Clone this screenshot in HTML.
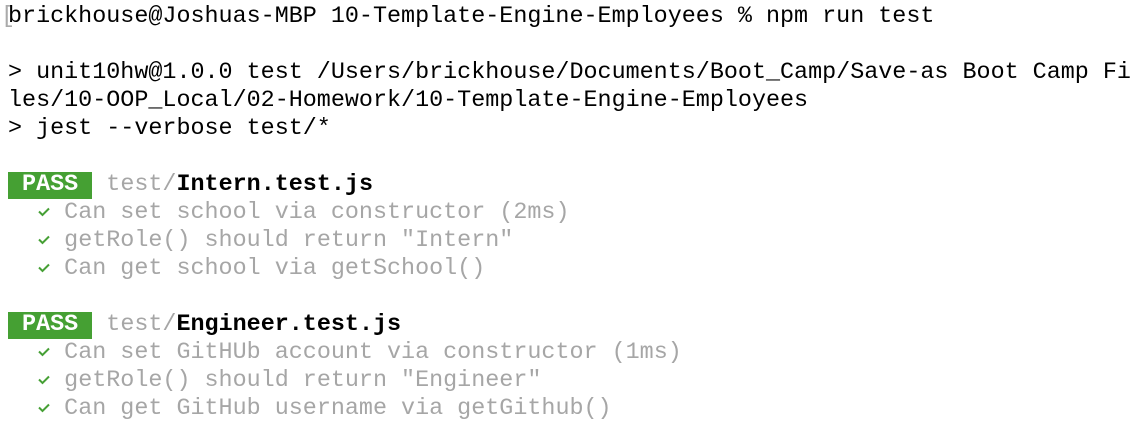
<!DOCTYPE html>
<html><head><style>
body{margin:0;width:1140px;height:448px;background:#fff;overflow:hidden;font-family:"Liberation Mono",monospace;font-size:23.4px;}
.t{position:absolute;left:8px;top:3px;}
.l{height:28px;line-height:28px;white-space:pre;color:#000;}
.g{color:#a6a6a6}
.b{font-weight:bold}
.p{background:#45a033;color:#fff;font-weight:bold;display:inline-block;height:27px;line-height:27px;}
.c{display:inline-block;width:14.04px;height:28px;vertical-align:top;position:relative}
.c svg{position:absolute;left:1px;top:6px}
.br{position:absolute;left:1px;top:3px;height:28px;line-height:28px;color:#aaa;}
</style></head><body>
<div class="br">[</div>
<div class="t">
<div class="l">brickhouse@Joshuas-MBP 10-Template-Engine-Employees % npm run test</div>
<div class="l"> </div>
<div class="l">&gt; unit10hw@1.0.0 test /Users/brickhouse/Documents/Boot_Camp/Save-as Boot Camp Fi</div>
<div class="l">les/10-OOP_Local/02-Homework/10-Template-Engine-Employees</div>
<div class="l">&gt; jest --verbose test/*</div>
<div class="l"> </div>
<div class="l"><span class="p"> PASS </span> <span class="g">test/</span><span class="b">Intern.test.js</span></div>
<div class="l">  <span class="c"><svg width="14" height="14" viewBox="0 0 14 14"><path d="M2 6.5L5.5 10L12 3.5" fill="none" stroke="#46a035" stroke-width="2"/></svg></span> <span class="g">Can set school via constructor (2ms)</span></div>
<div class="l">  <span class="c"><svg width="14" height="14" viewBox="0 0 14 14"><path d="M2 6.5L5.5 10L12 3.5" fill="none" stroke="#46a035" stroke-width="2"/></svg></span> <span class="g">getRole() should return "Intern"</span></div>
<div class="l">  <span class="c"><svg width="14" height="14" viewBox="0 0 14 14"><path d="M2 6.5L5.5 10L12 3.5" fill="none" stroke="#46a035" stroke-width="2"/></svg></span> <span class="g">Can get school via getSchool()</span></div>
<div class="l"> </div>
<div class="l"><span class="p"> PASS </span> <span class="g">test/</span><span class="b">Engineer.test.js</span></div>
<div class="l">  <span class="c"><svg width="14" height="14" viewBox="0 0 14 14"><path d="M2 6.5L5.5 10L12 3.5" fill="none" stroke="#46a035" stroke-width="2"/></svg></span> <span class="g">Can set GitHUb account via constructor (1ms)</span></div>
<div class="l">  <span class="c"><svg width="14" height="14" viewBox="0 0 14 14"><path d="M2 6.5L5.5 10L12 3.5" fill="none" stroke="#46a035" stroke-width="2"/></svg></span> <span class="g">getRole() should return "Engineer"</span></div>
<div class="l">  <span class="c"><svg width="14" height="14" viewBox="0 0 14 14"><path d="M2 6.5L5.5 10L12 3.5" fill="none" stroke="#46a035" stroke-width="2"/></svg></span> <span class="g">Can get GitHub username via getGithub()</span></div>
</div>
</body></html>
